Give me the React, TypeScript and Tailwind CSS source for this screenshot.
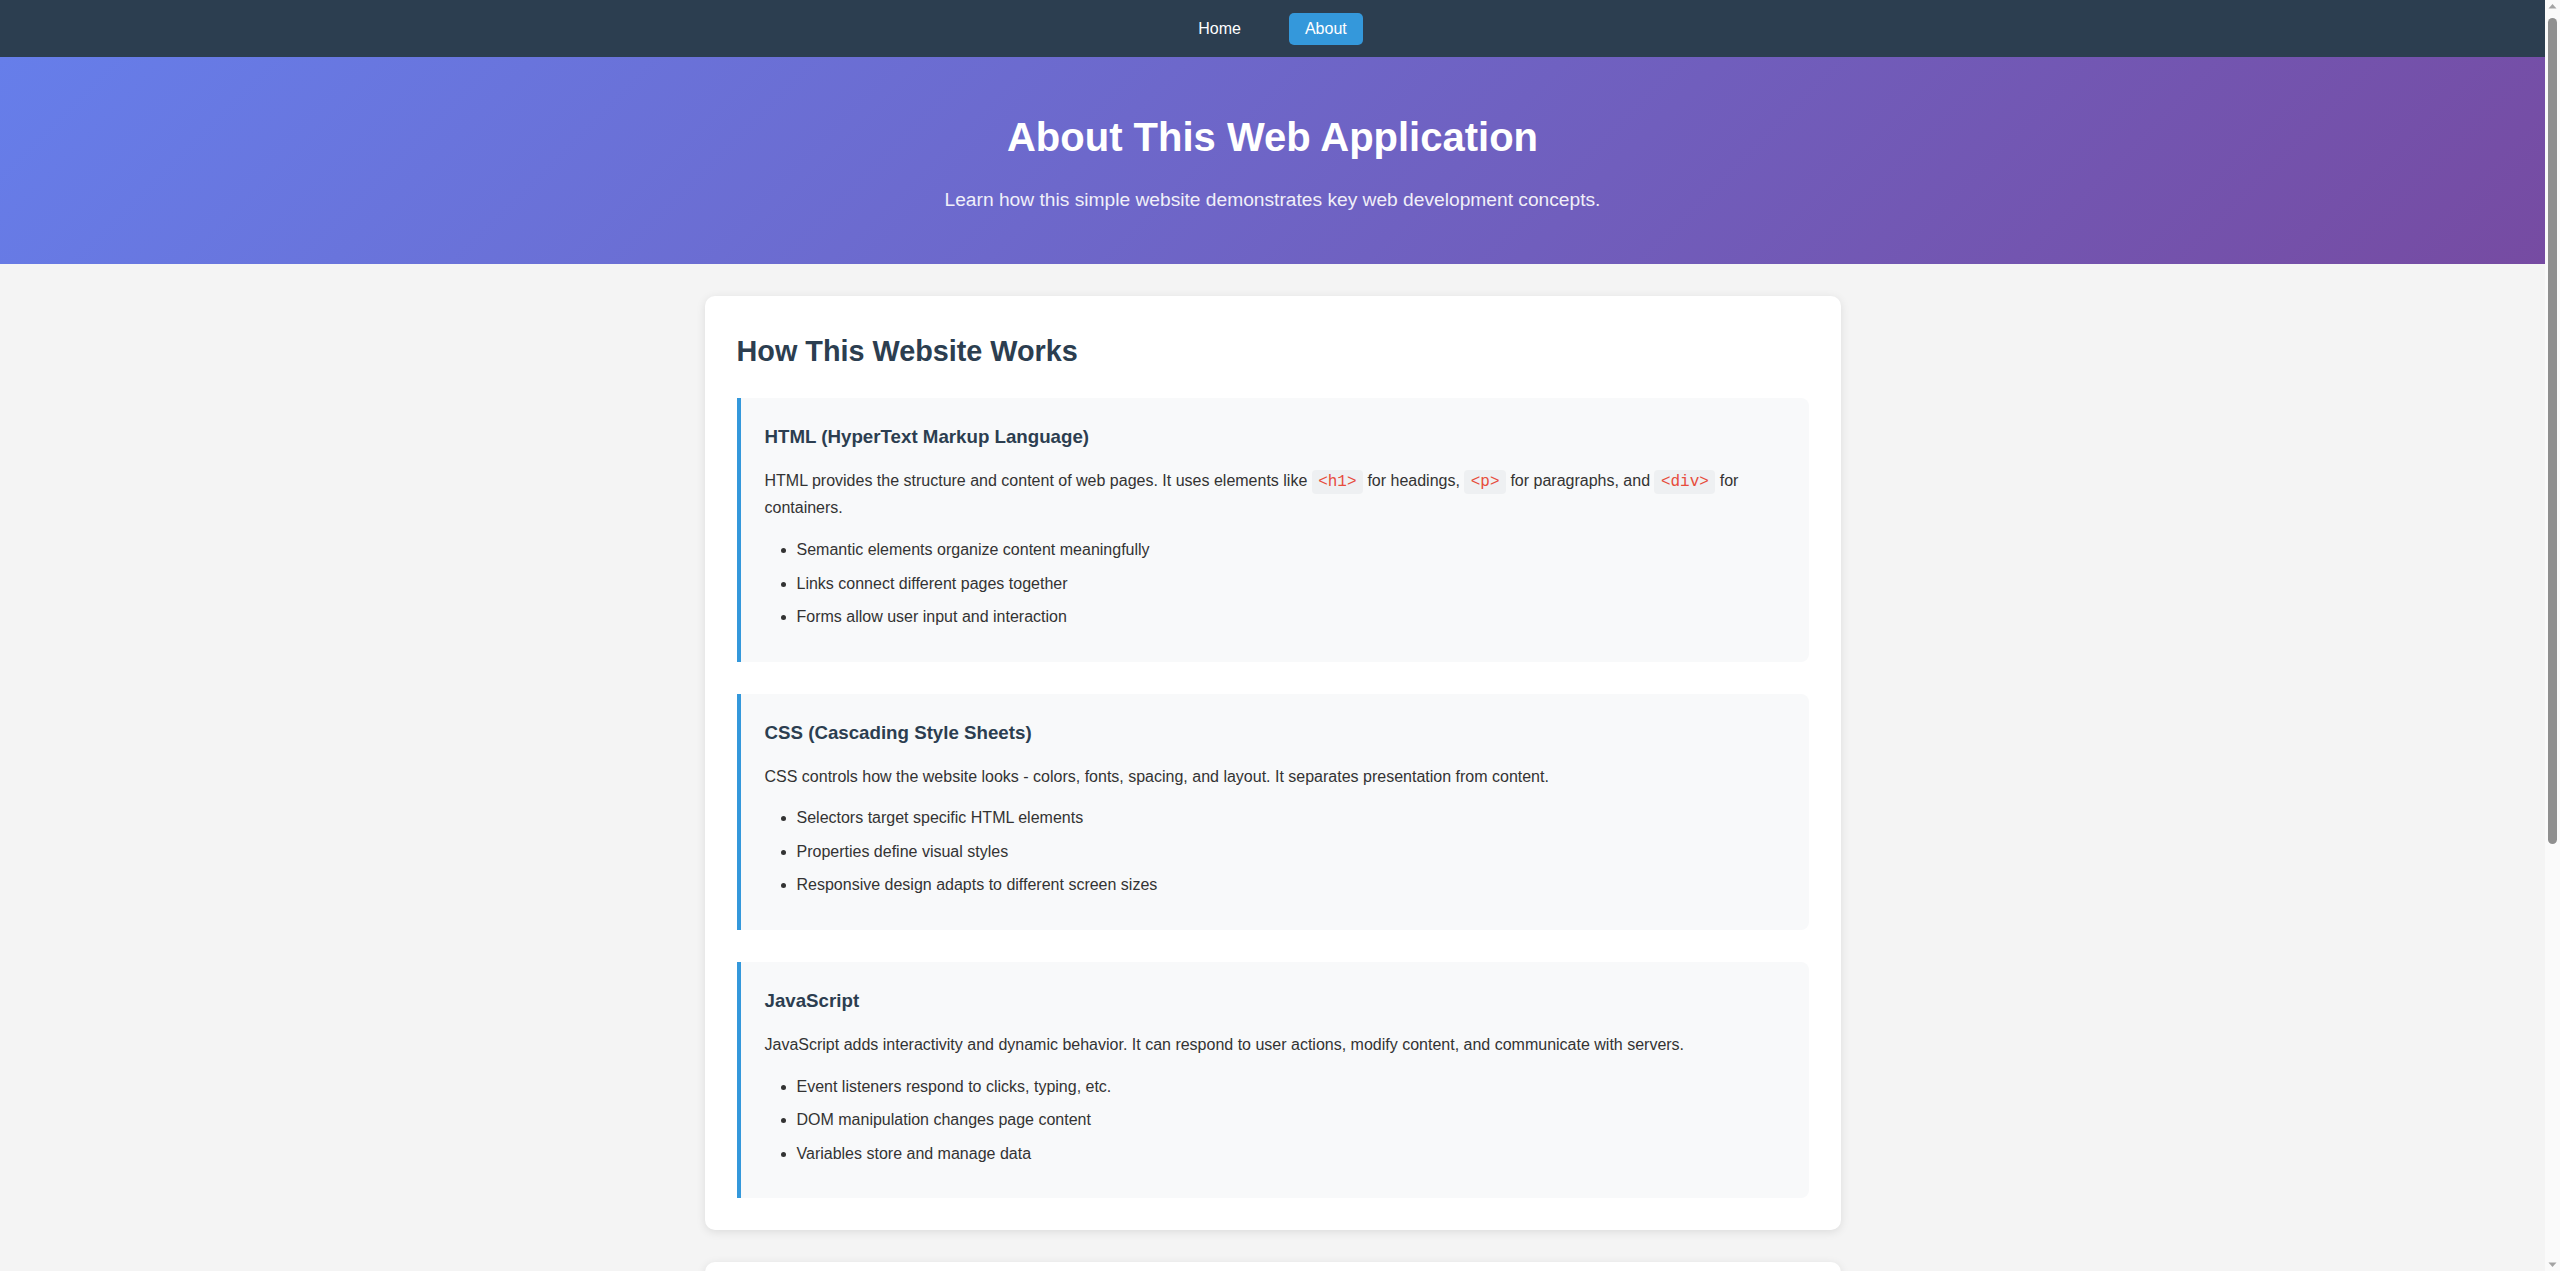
import type { ReactNode } from "react";

type Topic = {
  title: string;
  body: ReactNode;
  points: string[];
};

function Code({ children }: { children: ReactNode }) {
  return (
    <code className="font-['Liberation_Mono',monospace] text-[#e74c3c] bg-[#eef0f2] px-[6.4px] py-[3.2px] rounded">
      {children}
    </code>
  );
}

const TOPICS: Topic[] = [
  {
    title: "HTML (HyperText Markup Language)",
    body: (
      <>
        HTML provides the structure and content of web pages. It uses elements like <Code>&lt;h1&gt;</Code> for
        headings, <Code>&lt;p&gt;</Code> for paragraphs, and <Code>&lt;div&gt;</Code> for containers.
      </>
    ),
    points: [
      "Semantic elements organize content meaningfully",
      "Links connect different pages together",
      "Forms allow user input and interaction",
    ],
  },
  {
    title: "CSS (Cascading Style Sheets)",
    body: "CSS controls how the website looks - colors, fonts, spacing, and layout. It separates presentation from content.",
    points: [
      "Selectors target specific HTML elements",
      "Properties define visual styles",
      "Responsive design adapts to different screen sizes",
    ],
  },
  {
    title: "JavaScript",
    body: "JavaScript adds interactivity and dynamic behavior. It can respond to user actions, modify content, and communicate with servers.",
    points: [
      "Event listeners respond to clicks, typing, etc.",
      "DOM manipulation changes page content",
      "Variables store and manage data",
    ],
  },
];

const EXTRAS: Topic[] = [
  {
    title: "Navigation",
    body: "Each page shares the same navigation bar, so visitors can move between Home and About at any time.",
    points: ["The active page is highlighted", "Links use relative paths", "The layout stays consistent"],
  },
  {
    title: "Styling",
    body: "A shared stylesheet keeps colours, spacing and typography consistent across every page of the site.",
    points: ["Gradients add depth to the header", "Cards group related content"],
  },
];

function TopicBlock({ topic }: { topic: Topic }) {
  return (
    <div className="bg-[#f8f9fa] border-l-4 border-[#3498db] rounded-r-lg p-6">
      <h3 className="text-[18.72px] font-bold text-[#2c3e50] mb-4">{topic.title}</h3>
      <p className="mb-4">{topic.body}</p>
      <ul className="list-disc pl-8">
        {topic.points.map((p) => (
          <li key={p} className="mb-2">
            {p}
          </li>
        ))}
      </ul>
    </div>
  );
}

function Card({ heading, topics }: { heading: string; topics: Topic[] }) {
  return (
    <section className="bg-white rounded-[10px] shadow-[0_2px_10px_rgba(0,0,0,0.1)] p-8">
      <h2 className="text-[1.8rem] font-bold text-[#2c3e50] mb-6">{heading}</h2>
      <div className="flex flex-col gap-8">
        {topics.map((t) => (
          <TopicBlock key={t.title} topic={t} />
        ))}
      </div>
    </section>
  );
}

// classic browser scrollbar, pinned to the right edge of the window
function Scrollbar() {
  return (
    <div className="fixed top-0 right-0 h-screen w-[15px] bg-[#fafafa] flex flex-col items-center">
      <svg width="9" height="6" viewBox="0 0 9 6" className="mt-[3px] shrink-0">
        <path d="M0.5 5.5 L4.5 1 L8.5 5.5 Z" fill="#a3a3a3" />
      </svg>
      <div className="mt-[9px] h-[826px] w-[9px] rounded-full bg-[#8f8f8f]" />
      <div className="flex-1" />
      <svg width="9" height="6" viewBox="0 0 9 6" className="mb-[3px] shrink-0">
        <path d="M0.5 0.5 L8.5 0.5 L4.5 5 Z" fill="#a3a3a3" />
      </svg>
    </div>
  );
}

export default function App() {
  return (
    <div className="min-h-screen bg-[#f4f4f4] font-['Liberation_Sans',Arial,sans-serif] leading-[1.6] text-[#333]">
      <div className="mr-[15px]">
        {/* Top nav */}
        <nav className="bg-[#2c3e50] h-[57px] flex items-center justify-center gap-8">
          <a className="h-8 px-4 flex items-center rounded-[5px] text-white text-base">Home</a>
          <a className="h-8 px-4 flex items-center rounded-[5px] text-white text-base bg-[#3498db]">About</a>
        </nav>

        {/* Hero */}
        <header className="bg-[linear-gradient(135deg,#667eea_0%,#764ba2_100%)] text-white text-center py-12 px-8">
          <h1 className="text-[2.5rem] font-bold mb-4">About This Web Application</h1>
          <p className="text-[1.2rem] opacity-90">
            Learn how this simple website demonstrates key web development concepts.
          </p>
        </header>

        {/* Content */}
        <main className="max-w-[1200px] mx-auto px-8 py-8 flex flex-col gap-8">
          <Card heading="How This Website Works" topics={TOPICS} />
          <Card heading="Site Structure" topics={EXTRAS} />
        </main>
      </div>
      <Scrollbar />
    </div>
  );
}
